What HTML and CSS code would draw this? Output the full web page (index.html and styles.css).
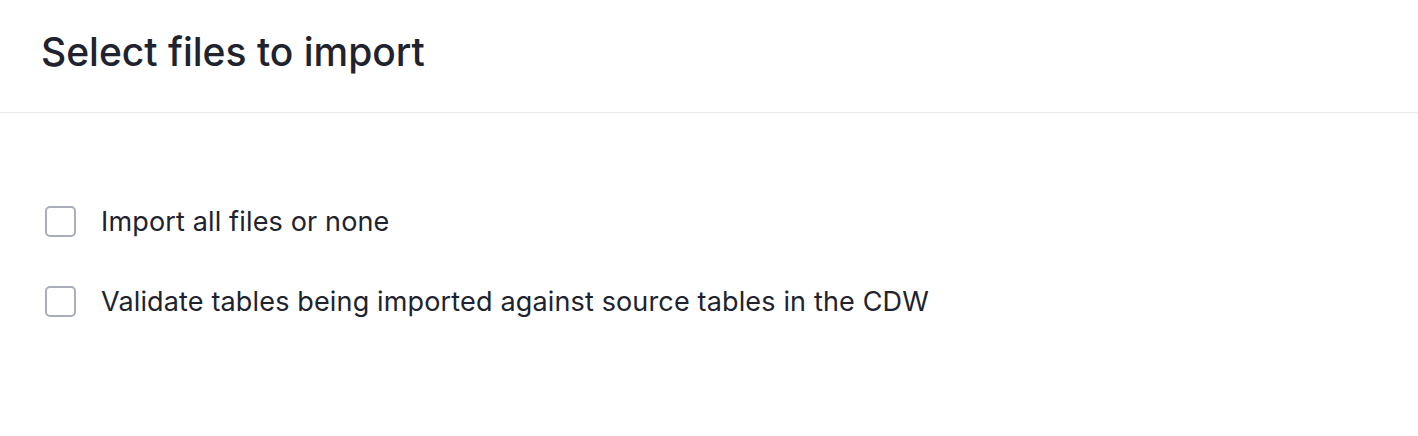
FILE: index.html
```html
<!DOCTYPE html>
<html>
<head>
<meta charset="utf-8">
<link rel="stylesheet" href="styles.css">
</head>
<body>
<div class="dialog">
  <header class="header">
    <h1 class="title">Select files to import</h1>
  </header>
  <div class="body">
    <label class="option">
      <span class="box"></span>
      <span class="label">Import all files or none</span>
    </label>
    <label class="option">
      <span class="box"></span>
      <span class="label">Validate tables being imported against source tables in the CDW</span>
    </label>
  </div>
</div>
</body>
</html>
```
FILE: styles.css
```css
html, body {
  margin: 0;
  padding: 0;
  background: #ffffff;
}
body {
  font-family: Inter, "Noto Sans", sans-serif;
  color: #20232e;
}
.dialog {
  width: 1418px;
  height: 436px;
}
.header {
  height: 113px;
  box-sizing: border-box;
  border-bottom: 1px solid #e8e8ee;
  padding-left: 41px;
  display: flex;
  align-items: center;
}
.title {
  margin: 0;
  font-size: 39px;
  font-weight: 500;
  line-height: 1;
  padding-bottom: 10px;
}
.body {
  padding: 93px 0 0 45px;
  display: flex;
  flex-direction: column;
  gap: 50px;
}
.option {
  display: flex;
  align-items: center;
  gap: 25px;
  height: 30px;
}
.box {
  width: 31px;
  height: 31px;
  box-sizing: border-box;
  border: 2px solid #a9adb7;
  border-radius: 5px;
  flex: none;
}
.label {
  font-size: 27px;
  letter-spacing: 0.15px;
  line-height: 1;
}
```
